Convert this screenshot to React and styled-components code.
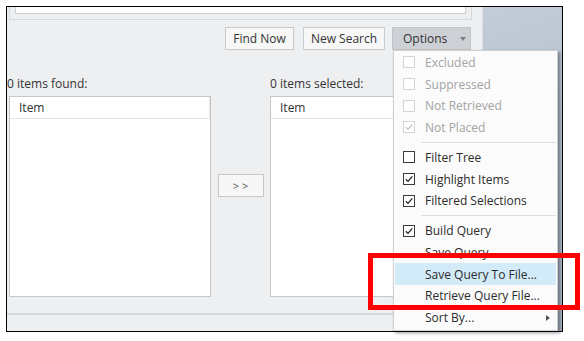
import React from 'react';
import styled, { createGlobalStyle } from 'styled-components';

const Global = createGlobalStyle`
  html, body { margin: 0; padding: 0; background: #fff; }
  body { font-family: "Open Sans", "Noto Sans", sans-serif; font-size: 12px; color: #333; }
`;

const Page = styled.div`
  width: 584px;
  height: 341px;
  padding: 6px 0 0 6px;
  box-sizing: border-box;
`;

const Frame = styled.div`
  position: relative;
  width: 557px;
  height: 326px;
  border: 1px solid #000;
  box-sizing: border-box;
  display: flex;
`;

const Dialog = styled.div`
  width: 476px;
  background: #eeeff1;
  display: flex;
  flex-direction: column;
  border-right: 1px solid #dcdde0;
  box-sizing: border-box;
`;

const Backdrop = styled.div`
  flex: 1;
  background: linear-gradient(160deg, #c3ccd8 0%, #b2bdcc 60%, #a9b4c4 100%);
`;

const GroupBox = styled.div`
  height: 13px;
  margin: 0 10px 0 2px;
  border: 1px solid #d6d7d9;
  border-top: none;
  box-sizing: border-box;
  padding: 0 5px;
`;

const Input = styled.div`
  height: 7px;
  background: #fff;
  border: 1px solid #cfd0d2;
  border-top: none;
  box-sizing: border-box;
`;

const ButtonRow = styled.div`
  display: flex;
  justify-content: flex-end;
  margin-top: 7px;
  padding-right: 11px;
  height: 23px;
`;

const Button = styled.div`
  height: 23px;
  width: ${p => p.$w}px;
  margin-left: ${p => p.$gap || 0}px;
  box-sizing: border-box;
  border: 1px solid ${p => (p.$pressed ? '#c2c5ca' : '#c9cacc')};
  background: ${p => (p.$pressed ? '#cdd0d5' : '#f7f7f7')};
  display: flex;
  align-items: center;
  justify-content: ${p => (p.$pressed ? 'flex-start' : 'center')};
  padding-left: ${p => (p.$pressed ? 10 : 0)}px;
  color: #333;
  font-size: 12px;
  white-space: nowrap;
`;

const DownArrow = styled.span`
  margin-left: 13px;
  width: 0;
  height: 0;
  border-left: 3.5px solid transparent;
  border-right: 3.5px solid transparent;
  border-top: 4px solid #7b7e84;
`;

const LabelRow = styled.div`
  display: flex;
  margin-top: 26px;
  height: 16px;
  line-height: 16px;
`;

const Label = styled.div`
  width: ${p => p.$w}px;
  color: #333;
  font-size: 12px;
  white-space: nowrap;
`;

const Lists = styled.div`
  display: flex;
  margin-top: 4px;
  padding-left: 2px;
  height: 201px;
`;

const ListBox = styled.div`
  width: 202px;
  height: 201px;
  background: #fff;
  border: 1px solid #c6c7c9;
  box-sizing: border-box;
`;

const ListHeader = styled.div`
  height: 22px;
  border-bottom: 1px solid #e4e5e7;
  display: flex;
  box-sizing: border-box;
`;

const HeaderCell = styled.div`
  width: 197px;
  border-right: 1px solid #e4e5e7;
  padding-left: 9px;
  line-height: 21px;
  color: #333;
  font-size: 12px;
`;

const Middle = styled.div`
  width: 59px;
  display: flex;
  justify-content: center;
  padding-top: 78px;
  box-sizing: border-box;
`;

const MoveButton = styled.div`
  width: 46px;
  height: 23px;
  box-sizing: border-box;
  border: 1px solid #c6c7c9;
  background: #f7f7f7;
  display: flex;
  align-items: center;
  justify-content: center;
  color: #555;
  font-size: 11px;
  white-space: pre;
`;

const StatusBar = styled.div`
  margin-top: auto;
  height: 18px;
  border-top: 2px solid #d6d7d9;
  box-sizing: border-box;
  background: #eeeff1;
`;

const Menu = styled.div`
  position: absolute;
  left: 386px;
  top: 43px;
  width: 165px;
  height: 281px;
  box-sizing: border-box;
  background: #fbfbfb;
  border: 1px solid #cfcfcf;
  box-shadow: 2px 2px 3px rgba(20, 20, 30, 0.45);
  display: flex;
  flex-direction: column;
  padding-top: 0.5px;
`;

const MenuItem = styled.div`
  height: 21.7px;
  flex: none;
  display: flex;
  align-items: center;
  margin: 0 1px;
  background: ${p => (p.$hover ? '#d3eaf9' : 'transparent')};
  color: ${p => (p.$disabled ? '#a3a3a3' : '#2b2b2b')};
  font-size: 12px;
  white-space: nowrap;
`;

const Gutter = styled.div`
  width: 30px;
  display: flex;
  justify-content: center;
  padding-right: 2px;
  box-sizing: border-box;
`;

const Check = styled.div`
  width: 12px;
  height: 12px;
  box-sizing: border-box;
  border: 1px solid ${p => (p.$disabled ? '#d3d3d3' : '#3a3a3a')};
  background: #fff;
  display: flex;
  align-items: center;
  justify-content: center;
`;

const SubArrow = styled.span`
  margin-left: auto;
  margin-right: 6px;
  width: 0;
  height: 0;
  border-top: 3.5px solid transparent;
  border-bottom: 3.5px solid transparent;
  border-left: 4px solid #555;
`;

const Separator = styled.div`
  height: 8.3px;
  flex: none;
  display: flex;
  align-items: center;
  padding-left: 27px;
  padding-right: 1px;
  &::after {
    content: '';
    flex: 1;
    height: 1px;
    background: #dedede;
  }
`;

const Callout = styled.div`
  position: absolute;
  left: 361px;
  top: 246px;
  width: 212px;
  height: 57px;
  box-sizing: border-box;
  border: 5px solid #f00;
`;

const Tick = ({ color }) => (
  <svg width="10" height="10" viewBox="0 0 10 10">
    <path d="M1.8 5.2 L4 7.4 L8.3 2.4" fill="none" stroke={color} strokeWidth="1.3" />
  </svg>
);

const items = [
  { label: 'Excluded', box: true, disabled: true },
  { label: 'Suppressed', box: true, disabled: true },
  { label: 'Not Retrieved', box: true, disabled: true },
  { label: 'Not Placed', box: true, checked: true, disabled: true },
  { sep: true },
  { label: 'Filter Tree', box: true },
  { label: 'Highlight Items', box: true, checked: true },
  { label: 'Filtered Selections', box: true, checked: true },
  { sep: true },
  { label: 'Build Query', box: true, checked: true },
  { label: 'Save Query' },
  { label: 'Save Query To File...', hover: true },
  { label: 'Retrieve Query File...' },
  { label: 'Sort By...', sub: true },
];

const App = () => (
  <Page>
    <Global />
    <Frame>
      <Dialog>
        <GroupBox>
          <Input />
        </GroupBox>
        <ButtonRow>
          <Button $w={69}>Find Now</Button>
          <Button $w={82} $gap={9}>New Search</Button>
          <Button $w={79} $gap={7} $pressed>
            Options
            <DownArrow />
          </Button>
        </ButtonRow>
        <LabelRow>
          <Label $w={263}>0 items found:</Label>
          <Label>0 items selected:</Label>
        </LabelRow>
        <Lists>
          <ListBox>
            <ListHeader>
              <HeaderCell>Item</HeaderCell>
            </ListHeader>
          </ListBox>
          <Middle>
            <MoveButton>{'> >'}</MoveButton>
          </Middle>
          <ListBox>
            <ListHeader>
              <HeaderCell>Item</HeaderCell>
            </ListHeader>
          </ListBox>
        </Lists>
        <StatusBar />
      </Dialog>
      <Backdrop />

      <Menu>
        {items.map((it, i) =>
          it.sep ? (
            <Separator key={i} />
          ) : (
            <MenuItem key={i} $disabled={it.disabled} $hover={it.hover}>
              <Gutter>
                {it.box && (
                  <Check $disabled={it.disabled}>
                    {it.checked && <Tick color={it.disabled ? '#c4c4c4' : '#222'} />}
                  </Check>
                )}
              </Gutter>
              {it.label}
              {it.sub && <SubArrow />}
            </MenuItem>
          )
        )}
      </Menu>
      <Callout />
    </Frame>
  </Page>
);

export default App;
